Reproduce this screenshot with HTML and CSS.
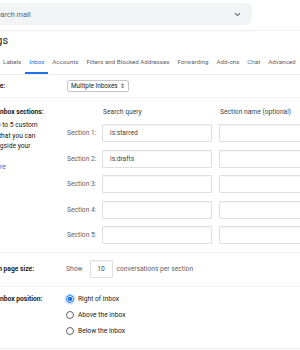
FILE: index.html
```html
<!DOCTYPE html>
<html lang="en">
<head>
    <meta charset="UTF-8">
    <meta name="viewport" content="width=device-width, initial-scale=1.0">
    <title>Settings - Inbox</title>
    <link rel="stylesheet" href="styles.css">
</head>
<body>
    <div class="page">
        <!-- Barra de busca -->
        <header class="topbar">
            <div class="search">
                <span class="search-text">Search mail</span>
                <svg class="chevron" width="7" height="5" viewBox="0 0 7 5">
                    <path d="M1 1.2 L3.5 3.6 L6 1.2" fill="none" stroke="#5f6368" stroke-width="1.1"/>
                </svg>
            </div>
        </header>

        <h1 class="title">Settings</h1>

        <nav class="tabs">
            <a>General</a>
            <a>Labels</a>
            <a class="active">Inbox</a>
            <a>Accounts</a>
            <a>Filters and Blocked Addresses</a>
            <a>Forwarding</a>
            <a>Add-ons</a>
            <a>Chat</a>
            <a>Advanced</a>
            <a>Offline</a>
        </nav>

        <!-- Tipo de caixa -->
        <div class="row row-type">
            <div class="row-label">Inbox type:</div>
            <div class="row-body">
                <div class="select">Multiple Inboxes <span class="arrows">&#8661;</span></div>
            </div>
        </div>

        <!-- Secoes -->
        <div class="row row-sections">
            <div class="row-label">
                Multiple inbox sections:
                <p class="desc">Create up to 5 custom sections that you can view alongside your inbox.</p>
                <a class="link">Learn more</a>
            </div>
            <div class="row-body">
                <div class="sections">
                    <span></span>
                    <span class="col-head">Search query</span>
                    <span class="col-head">Section name (optional)</span>

                    <label>Section 1:</label>
                    <div class="field">is:starred</div>
                    <div class="field"></div>

                    <label>Section 2:</label>
                    <div class="field">is:drafts</div>
                    <div class="field"></div>

                    <label>Section 3:</label>
                    <div class="field"></div>
                    <div class="field"></div>

                    <label>Section 4:</label>
                    <div class="field"></div>
                    <div class="field"></div>

                    <label>Section 5:</label>
                    <div class="field"></div>
                    <div class="field"></div>
                </div>
            </div>
        </div>

        <!-- Tamanho da pagina -->
        <div class="row row-size">
            <div class="row-label">Maximum page size:</div>
            <div class="row-body size-line">
                <span>Show</span>
                <div class="field small">10</div>
                <span>conversations per section</span>
            </div>
        </div>

        <!-- Posicao -->
        <div class="row row-position">
            <div class="row-label">Multiple inbox position:</div>
            <div class="row-body">
                <label class="radio"><input type="radio" name="pos" checked> Right of inbox</label>
                <label class="radio"><input type="radio" name="pos"> Above the inbox</label>
                <label class="radio"><input type="radio" name="pos"> Below the inbox</label>
            </div>
        </div>
    </div>
</body>
</html>
```

FILE: styles.css
```css
* {
    margin: 0;
    padding: 0;
    box-sizing: border-box;
}

html, body {
    overflow: hidden;
}

body {
    font-family: Roboto, "Liberation Sans", sans-serif;
    font-size: 6.7px;
    background-color: #fff;
    color: #222;
}

.page {
    margin-left: -32px;
}

/* Barra de busca */
.topbar {
    height: 31px;
    padding-top: 3px;
    border-bottom: 1px solid #efefef;
}

.search {
    width: 284px;
    height: 22px;
    background-color: #f1f3f4;
    border-radius: 6px;
    display: flex;
    align-items: center;
    justify-content: space-between;
    padding: 0 11px 0 24px;
}

.search-text {
    font-size: 7.4px;
    color: #5f6368;
}

.title {
    font-size: 11px;
    font-weight: normal;
    line-height: 14px;
    color: #202124;
    margin: 3px 0 4px;
}

/* Abas */
.tabs {
    display: flex;
    white-space: nowrap;
    padding-left: 2px;
    border-bottom: 1px solid #efefef;
}

.tabs a {
    font-size: 6.2px;
    line-height: 8px;
    color: #5f6368;
    padding: 6px 4px;
    border-bottom: 2px solid transparent;
}

.tabs a.active {
    color: #1a73e8;
    border-bottom-color: #1a73e8;
}

/* Linhas de configuracao */
.row {
    display: flex;
    border-bottom: 1px solid #efefef;
    padding-left: 4px;
}

.row-label {
    width: 94px;
    flex-shrink: 0;
    font-weight: bold;
    color: #222;
}

.row-body {
    flex: 1;
}

.row-type {
    padding-top: 5px;
    padding-bottom: 5px;
}

.row-type .row-label {
    line-height: 12px;
}

.select {
    display: inline-flex;
    align-items: center;
    height: 12px;
    padding: 0 3px;
    margin-left: 1px;
    border: 1px solid #c6c6c6;
    border-radius: 2px;
    font-size: 6.4px;
    color: #222;
}

.arrows {
    font-size: 5.5px;
    margin-left: 2px;
    color: #444;
}

.row-sections {
    padding-top: 9px;
    padding-bottom: 8px;
}

.row-sections .row-label {
    line-height: 10px;
}

.desc {
    font-weight: normal;
    width: 70px;
    line-height: 10.6px;
    margin-top: 3px;
}

.link {
    display: block;
    font-weight: normal;
    color: #1a73e8;
    line-height: 10.6px;
}

.sections {
    display: grid;
    grid-template-columns: 29px 110px 110px;
    column-gap: 7px;
    row-gap: 7.5px;
    align-items: center;
}

.sections .col-head {
    line-height: 10px;
    padding-left: 1px;
    color: #444;
    margin-bottom: -0.5px;
}

.sections label {
    padding-left: 1px;
    color: #5f6368;
    white-space: nowrap;
}

.field {
    height: 18px;
    border: 1px solid #e0e0e0;
    border-radius: 1px;
    box-shadow: inset 0 1px 1px rgba(0, 0, 0, 0.04);
    padding-left: 7px;
    line-height: 16px;
    color: #444;
}

.row-size {
    padding-top: 7px;
    padding-bottom: 8px;
}

.row-size .row-label {
    line-height: 18px;
}

.size-line {
    display: flex;
    align-items: center;
    color: #5f6368;
}

.field.small {
    width: 23px;
    padding-left: 0;
    text-align: center;
    margin: 0 4px 0 7px;
}

.row-position {
    padding-top: 4px;
    padding-bottom: 9px;
}

.row-position .row-label {
    line-height: 16px;
}

.radio {
    display: flex;
    align-items: center;
    height: 16px;
    color: #222;
}

.radio input {
    appearance: none;
    width: 8px;
    height: 8px;
    border: 1px solid #5f6368;
    border-radius: 50%;
    margin-right: 4px;
    background-color: #fff;
}

.radio input:checked {
    border-color: #1a73e8;
    background: radial-gradient(circle, #1a73e8 0 2px, #fff 2.5px);
    box-shadow: 0 0 0 1.5px rgba(26, 115, 232, 0.2);
}
```
